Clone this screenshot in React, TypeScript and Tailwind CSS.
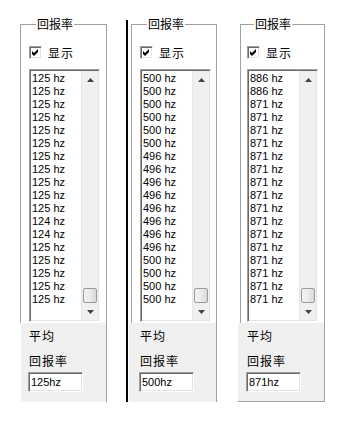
import React from "react";

const P1 = ["125","125","125","125","125","125","125","125","125","125","125","124","124","125","125","125","125","125"];
const P2 = ["500","500","500","500","500","500","496","496","496","496","496","496","496","496","500","500","500","500"];
const P3 = ["886","886","871","871","871","871","871","871","871","871","871","871","871","871","871","871","871","871"];

const cjk = { fontFamily: '"Noto Sans CJK SC", "Liberation Sans", sans-serif' };
const lat = { fontFamily: '"Liberation Sans", Arial, sans-serif' };

function Check() {
  return (
    <div className="w-[13px] h-[13px] bg-white border border-t-[#a0a0a0] border-l-[#a0a0a0] border-r-white border-b-white shadow-[inset_1px_1px_0_#696969,inset_-1px_-1px_0_#e3e3e3] flex items-center justify-center">
      <svg width="9" height="9" viewBox="0 0 9 9">
        <path d="M1 3 L3 5 L7 1 L7 4 L3 8 L1 6 Z" fill="#000" />
      </svg>
    </div>
  );
}

function ListBox({ items }: { items: string[] }) {
  return (
    <div className="w-[71px] h-[253px] flex bg-white border border-t-[#a0a0a0] border-l-[#a0a0a0] border-r-white border-b-white shadow-[inset_1px_1px_0_#696969,inset_-1px_-1px_0_#e3e3e3] p-[1px] overflow-hidden">
      <div className="flex-1 flex flex-col pt-[1px] text-[11px] leading-[13px] text-black pl-[1px]" style={lat}>
        {items.map((v, i) => (
          <div key={i} className="h-[13px] whitespace-nowrap">{v} hz</div>
        ))}
      </div>
      <div className="w-[17px] h-full flex flex-col bg-[#f0f0f0] border-l border-[#e6e6e6]">
        <div className="h-[17px] flex items-center justify-center">
          <svg width="7" height="4" viewBox="0 0 7 4"><path d="M3.5 0 L7 4 L0 4 Z" fill="#404040" /></svg>
        </div>
        <div className="flex-1" />
        <div className="h-[15px] mx-[1px] rounded-[2px] border border-[#9a9a9a] bg-gradient-to-r from-[#f2f2f2] via-[#ebebeb] to-[#d8d8d8]" />
        <div className="h-[17px] flex items-center justify-center">
          <svg width="7" height="4" viewBox="0 0 7 4"><path d="M0 0 L7 0 L3.5 4 Z" fill="#404040" /></svg>
        </div>
      </div>
    </div>
  );
}

function Panel({ items, value, width, padL, lowerShift, bottomBorder }: { items: string[]; value: string; width: number; padL: number; lowerShift: number; bottomBorder?: boolean }) {
  return (
    <div className="flex flex-col" style={{ width }}>
      <fieldset className="h-[306px] border border-b-0 border-[#a0a0a0] shadow-[inset_1px_1px_0_#ffffff] m-0 p-0" style={{ paddingLeft: padL - 1 }}>
        <legend className="ml-[7px] px-px text-[12px] leading-[14px] text-black" style={cjk}>回报率</legend>
        <div className="flex items-center mt-[15px] h-[13px]">
          <Check />
          <span className="ml-[6px] text-[12px] leading-[14px] text-black tracking-[1px]" style={cjk}>显示</span>
        </div>
        <div className="mt-[10px]">
          <ListBox items={items} />
        </div>
      </fieldset>
      <div className={"h-[79px] bg-[#f0f0f0] border-r border-[#a0a0a0] flex flex-col pt-[6px] " + (bottomBorder ? "border-b" : "")} style={{ marginLeft: lowerShift, paddingLeft: padL - lowerShift }}>
        <div className="text-[12px] leading-[14px] text-black tracking-[1px]" style={cjk}>平均</div>
        <div className="mt-[11px] text-[12px] leading-[14px] text-black tracking-[1px]" style={cjk}>回报率</div>
        <div className="mt-[4px] -ml-[1px] w-[55px] h-[20px] bg-white border border-t-[#a0a0a0] border-l-[#a0a0a0] border-r-white border-b-white shadow-[inset_1px_1px_0_#696969,inset_-1px_-1px_0_#e3e3e3] pl-[2px] text-[11px] leading-[18px] text-black" style={lat}>
          {value}
        </div>
      </div>
    </div>
  );
}

export default function App() {
  return (
    <div className="w-[345px] h-[422px] bg-white flex items-start pt-[17px] pl-[20px]">
      <Panel items={P1} value="125hz" width={87} padL={9} lowerShift={1} />
      <div className="ml-[19px] mt-[3px] w-[2px] h-[382px] bg-black" />
      <div className="ml-[3px]">
        <Panel items={P2} value="500hz" width={86} padL={9} lowerShift={-2} />
      </div>
      <div className="ml-[23px]">
        <Panel items={P3} value="871hz" width={85} padL={7} lowerShift={-2} bottomBorder />
      </div>
    </div>
  );
}
